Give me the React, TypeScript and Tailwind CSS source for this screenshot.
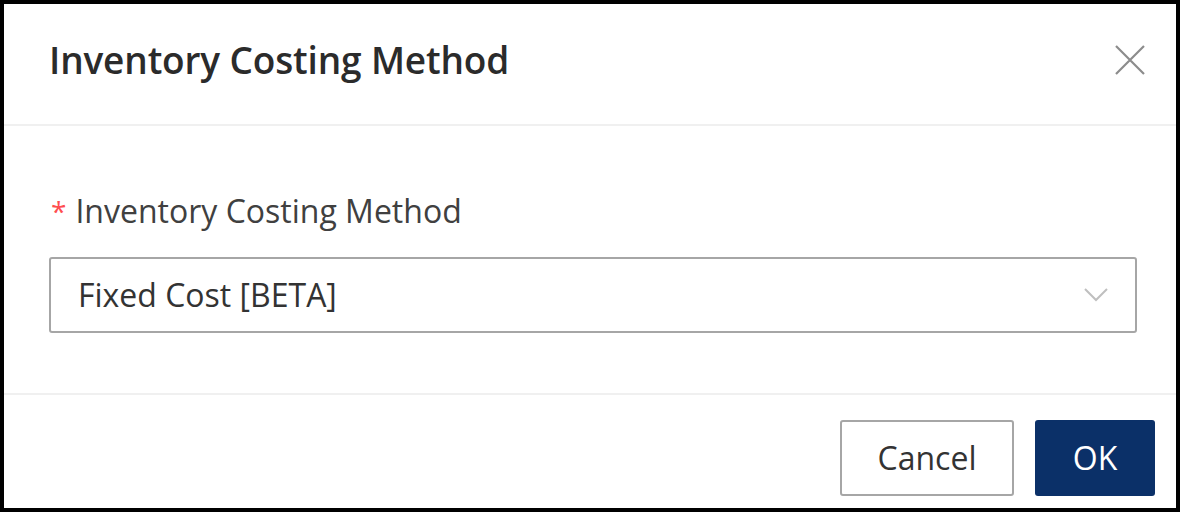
import React from 'react';

const font = { fontFamily: '"Open Sans", "Noto Sans", sans-serif' };

const CostingMethodModal: React.FC = () => {
  return (
    <div className="w-[1183px] h-[513px] bg-white" style={font}>
      <div className="w-[1180px] h-[512px] border-4 border-black bg-white flex flex-col">
        {/* header */}
        <div className="h-[122px] shrink-0 flex items-center justify-between pl-[45px] pr-[26px] pb-[8px] border-b-2 border-[#f0f0f0]">
          <h2 className="text-[37px] font-semibold text-[#2b2b2b] tracking-[-0.15px]">Inventory Costing Method</h2>
          <button className="w-[40px] h-[40px] flex items-center justify-center text-[#8c8c8c]">
            <svg width="32" height="32" viewBox="0 0 32 32" fill="none" stroke="currentColor" strokeWidth="2.2">
              <path d="M2 2L30 30M30 2L2 30" />
            </svg>
          </button>
        </div>

        {/* body */}
        <div className="h-[267px] shrink-0 pl-[45px] pr-[39px] pt-[70px]">
          <label className="flex items-center gap-[9px] text-[32px] text-[#404040] h-[30px]">
            <span className="text-[#ff4d4f] text-[28px] pl-[2px]">*</span>
            <span>Inventory Costing Method</span>
          </label>
          <div className="mt-[31px] h-[76px] border-2 border-[#a6a6a6] rounded-[3px] flex items-center justify-between pl-[27px] pr-[27px]">
            <span className="text-[32px] text-[#333333]">Fixed Cost [BETA]</span>
            <svg width="24" height="14" viewBox="0 0 24 14" fill="none" stroke="#bfbfbf" strokeWidth="2">
              <path d="M1 1L12 12L23 1" />
            </svg>
          </div>
        </div>

        {/* footer */}
        <div className="flex-1 border-t-2 border-[#f0f0f0] flex items-start justify-end gap-[21px] pt-[25px] pr-[21px]">
          <button className="w-[174px] h-[76px] border-2 border-[#a6a6a6] rounded-[3px] bg-white text-[32px] text-[#333333]">
            Cancel
          </button>
          <button className="w-[120px] h-[76px] rounded-[3px] bg-[#0b3068] text-[32px] text-white">
            OK
          </button>
        </div>
      </div>
    </div>
  );
};

export default function App() {
  return <CostingMethodModal />;
}
